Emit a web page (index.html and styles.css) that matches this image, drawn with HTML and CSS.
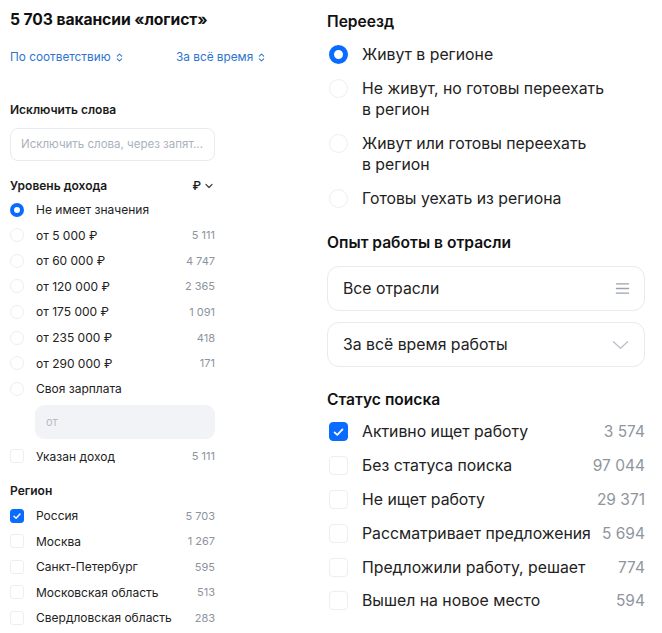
FILE: index.html
```html
<!DOCTYPE html>
<html lang="ru">
<head>
<meta charset="utf-8">
<link rel="stylesheet" href="styles.css">
</head>
<body>
<div class="page">
  <aside class="left">
    <h1 class="title">5 703 вакансии «логист»</h1>
    <div class="sorts">
      <span class="sort sort-a">По соответствию <svg class="updown" viewBox="0 0 8 12"><path d="M1.5 4.5 4 2l2.5 2.5M1.5 7.5 4 10l2.5-2.5" fill="none" stroke="currentColor" stroke-width="1.2" stroke-linecap="round" stroke-linejoin="round"/></svg></span>
      <span class="sort">За всё время <svg class="updown" viewBox="0 0 8 12"><path d="M1.5 4.5 4 2l2.5 2.5M1.5 7.5 4 10l2.5-2.5" fill="none" stroke="currentColor" stroke-width="1.2" stroke-linecap="round" stroke-linejoin="round"/></svg></span>
    </div>

    <div class="l-head l-head-excl">Исключить слова</div>
    <div class="l-input">Исключить слова, через запят...</div>

    <div class="l-head l-head-income"><span>Уровень дохода</span><span class="cur">₽ <svg class="chev-s" viewBox="0 0 8 6"><path d="M1 1.5 4 4.5 7 1.5" fill="none" stroke="currentColor" stroke-width="1.2" stroke-linecap="round" stroke-linejoin="round"/></svg></span></div>
    <ul class="l-list radios">
      <li><span class="radio on"></span><span class="lbl">Не имеет значения</span></li>
      <li><span class="radio"></span><span class="lbl">от 5 000 ₽</span><span class="cnt">5 111</span></li>
      <li><span class="radio"></span><span class="lbl">от 60 000 ₽</span><span class="cnt">4 747</span></li>
      <li><span class="radio"></span><span class="lbl">от 120 000 ₽</span><span class="cnt">2 365</span></li>
      <li><span class="radio"></span><span class="lbl">от 175 000 ₽</span><span class="cnt">1 091</span></li>
      <li><span class="radio"></span><span class="lbl">от 235 000 ₽</span><span class="cnt">418</span></li>
      <li><span class="radio"></span><span class="lbl">от 290 000 ₽</span><span class="cnt">171</span></li>
      <li><span class="radio"></span><span class="lbl">Своя зарплата</span></li>
    </ul>
    <div class="l-from">от</div>
    <ul class="l-list checks single">
      <li><span class="check"></span><span class="lbl">Указан доход</span><span class="cnt">5 111</span></li>
    </ul>

    <div class="l-head l-head-region">Регион</div>
    <ul class="l-list checks">
      <li><span class="check on"><svg viewBox="0 0 12 12"><path d="M3 6.2 5.1 8.2 9 4" fill="none" stroke="#fff" stroke-width="1.4" stroke-linecap="round" stroke-linejoin="round"/></svg></span><span class="lbl">Россия</span><span class="cnt">5 703</span></li>
      <li><span class="check"></span><span class="lbl">Москва</span><span class="cnt">1 267</span></li>
      <li><span class="check"></span><span class="lbl">Санкт-Петербург</span><span class="cnt">595</span></li>
      <li><span class="check"></span><span class="lbl">Московская область</span><span class="cnt">513</span></li>
      <li><span class="check"></span><span class="lbl">Свердловская область</span><span class="cnt">283</span></li>
    </ul>
  </aside>

  <main class="right">
    <h2 class="r-head r-head-move">Переезд</h2>
    <ul class="r-radios">
      <li><span class="rradio on"></span><span class="rlbl">Живут в регионе</span></li>
      <li><span class="rradio"></span><span class="rlbl">Не живут, но готовы переехать<br>в регион</span></li>
      <li><span class="rradio"></span><span class="rlbl">Живут или готовы переехать<br>в регион</span></li>
      <li><span class="rradio"></span><span class="rlbl">Готовы уехать из региона</span></li>
    </ul>

    <h2 class="r-head r-head-exp">Опыт работы в отрасли</h2>
    <div class="select">
      <span>Все отрасли</span>
      <svg class="sel-icon" viewBox="0 0 16 14"><path d="M1.5 2h13M1.5 7h13M1.5 12h13" stroke="#9aa3ad" stroke-width="1.4" stroke-linecap="round"/></svg>
    </div>
    <div class="select select-2">
      <span>За всё время работы</span>
      <svg class="sel-icon chev" viewBox="0 0 18 10"><path d="M1.5 1.5 9 8.5l7.5-7" fill="none" stroke="#b8bfc7" stroke-width="1.3" stroke-linecap="round" stroke-linejoin="round"/></svg>
    </div>

    <h2 class="r-head r-head-status">Статус поиска</h2>
    <ul class="r-checks">
      <li><span class="rcheck on"><svg viewBox="0 0 18 18"><path d="M4.8 9.3 7.7 12 13.2 6.3" fill="none" stroke="#fff" stroke-width="1.8" stroke-linecap="round" stroke-linejoin="round"/></svg></span><span class="rlbl">Активно ищет работу</span><span class="rcnt">3 574</span></li>
      <li><span class="rcheck"></span><span class="rlbl">Без статуса поиска</span><span class="rcnt">97 044</span></li>
      <li><span class="rcheck"></span><span class="rlbl">Не ищет работу</span><span class="rcnt">29 371</span></li>
      <li><span class="rcheck"></span><span class="rlbl">Рассматривает предложения</span><span class="rcnt">5 694</span></li>
      <li><span class="rcheck"></span><span class="rlbl">Предложили работу, решает</span><span class="rcnt">774</span></li>
      <li><span class="rcheck"></span><span class="rlbl">Вышел на новое место</span><span class="rcnt">594</span></li>
    </ul>
  </main>
</div>
</body>
</html>
```

FILE: styles.css
```css
* { box-sizing: border-box; }
html, body { margin: 0; padding: 0; background: #fff; }
body {
  font-family: Inter, "Noto Sans", sans-serif;
  color: #1f1f1f;
  width: 662px;
  height: 633px;
  overflow: hidden;
}
ul { list-style: none; margin: 0; padding: 0; }
h1, h2 { margin: 0; }

.page { display: flex; align-items: flex-start; }

/* ---------- left column ---------- */
.left { width: 215px; padding-left: 10px; flex: none; }
.title {
  font-size: 15.7px; font-weight: 700; line-height: 20px;
  margin-top: 10px; letter-spacing: -0.1px; color: #111;
  white-space: nowrap;
}
.sorts {
  display: flex; margin-top: 20px; height: 14px; align-items: center;
  font-size: 11.8px; color: #2c74d0; line-height: 14px;
  white-space: nowrap; width: 300px;
}
.sort { display: inline-flex; align-items: center; gap: 5px; flex: none; }
.sort-a { width: 166px; }
.updown { width: 7px; height: 11px; }

.l-head {
  font-size: 12px; font-weight: 600; line-height: 14px; color: #1a1a1a;
}
.l-head-excl { margin-top: 39px; }
.l-input {
  margin-top: 11px; height: 33px; width: 205px;
  border: 1px solid #e8eaed; border-radius: 8px;
  font-size: 11.5px; color: #aab2bc; line-height: 31px; padding-left: 10px;
  white-space: nowrap; overflow: hidden;
}
.l-head-income {
  margin-top: 18px; display: flex; justify-content: space-between; width: 205px;
  padding-right: 2px;
}
.cur { display: inline-flex; align-items: center; gap: 4px; font-weight: 500; }
.chev-s { width: 8px; height: 6px; color: #444; }

.l-list { width: 205px; }
.l-list li {
  display: flex; align-items: center; height: 25.55px;
  font-size: 12px; color: #222;
}
.radios { margin-top: 4px; }
.l-list .lbl { flex: 1; margin-left: 12px; }
.l-list .cnt { font-size: 11px; color: #8c949e; }
.radio {
  width: 14px; height: 14px; border-radius: 50%;
  border: 1px solid #eceef0; flex: none; margin-left: 0;
}
.radio.on { border: 4px solid #0a6cff; background: #fff; }
.l-from {
  margin-left: 25px; margin-top: 4px; width: 180px; height: 34px;
  background: #f1f3f7; border-radius: 9px;
  font-size: 11px; color: #b4bcc7; line-height: 34px; padding-left: 11px;
}
.single { margin-top: 4px; }
.check {
  width: 14px; height: 14px; border-radius: 3px; border: 1px solid #eceef0; flex: none;
  display: inline-flex; align-items: center; justify-content: center;
}
.check.on { background: #0a6cff; border-color: #0a6cff; }
.check svg { width: 12px; height: 12px; }
.l-head-region { margin-top: 15px; }
.l-head-region + .checks { margin-top: 5px; }

/* ---------- right column ---------- */
.right { margin-left: 112px; width: 318px; flex: none; }
.r-head { font-size: 15.6px; font-weight: 600; line-height: 20px; color: #111; }
.r-head-move { margin-top: 12px; }
.r-radios { margin-top: 12px; display: flex; flex-direction: column; gap: 13px; }
.r-radios li { display: flex; align-items: flex-start; }
.rlbl { font-size: 15.8px; line-height: 21px; color: #222; margin-left: 14px; white-space: nowrap; }
.rradio {
  width: 19px; height: 19px; border-radius: 50%; border: 1px solid #eceef0;
  flex: none; margin-top: 1px; margin-left: 2px;
}
.rradio.on { border: 5.5px solid #0a6cff; }
.r-head-exp { margin-top: 24px; }
.select {
  margin-top: 13px; height: 45px; border: 1px solid #e8eaed; border-radius: 12px;
  display: flex; align-items: center; justify-content: space-between;
  padding: 0 14px 0 15px; font-size: 15.8px; color: #222;
}
.select-2 { margin-top: 11px; }
.sel-icon { width: 15px; height: 13px; }
.sel-icon.chev { width: 17px; height: 10px; margin-right: 1px; }
.r-head-status { margin-top: 23px; }
.r-checks { margin-top: 5px; }
.r-checks li { display: flex; align-items: center; height: 33.8px; }
.r-checks .rlbl { flex: 1; }
.rcheck {
  width: 19px; height: 19px; border-radius: 4px; border: 1px solid #eceef0;
  flex: none; margin-left: 2px; display: inline-flex; align-items: center; justify-content: center;
}
.rcheck.on { background: #0a6cff; border-color: #0a6cff; }
.rcheck svg { width: 18px; height: 18px; }
.rcnt { font-size: 15.5px; color: #8f969e; }
```
